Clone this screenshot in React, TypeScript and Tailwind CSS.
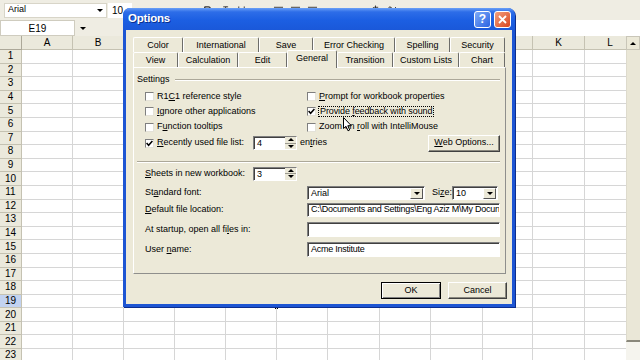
import React from 'react';
import { Bold, Italic, Underline, AlignLeft, AlignCenter, AlignRight, DollarSign, Percent } from 'lucide-react';

const cols = ['A', 'B', 'C', 'D', 'E', 'F', 'G', 'H', 'I', 'J', 'K', 'L'];
const shownHeaders = ['A', 'B', 'K', 'L'];
const rows = Array.from({ length: 23 }, (_, i) => i + 1);

function TriDown() {
  return <span className="w-0 h-0 border-l-[3px] border-r-[3px] border-t-[3px] border-l-transparent border-r-transparent border-t-black" />;
}
function TriUp() {
  return <span className="w-0 h-0 border-l-[3px] border-r-[3px] border-b-[3px] border-l-transparent border-r-transparent border-b-black" />;
}

function Check({ checked }: { checked?: boolean }) {
  return (
    <span className="relative block w-[9px] h-[9px] shrink-0 bg-white border border-t-[#7f7f7f] border-l-[#7f7f7f] border-b-[#e4e2d8] border-r-[#e4e2d8]">
      {checked && (
        <svg className="absolute left-0 top-0" width="7" height="7" viewBox="0 0 7 7">
          <path d="M0.6 3.1 L2.6 5.3 L6.4 0.9" stroke="#000" strokeWidth="1.5" fill="none" />
        </svg>
      )}
    </span>
  );
}

function Spin({ v }: { v: string }) {
  return (
    <div className="w-[44px] h-[14px] flex bg-white border border-t-[#7f7f7f] border-l-[#7f7f7f] border-b-white border-r-white shadow-[inset_1px_1px_0_#404040]">
      <span className="flex-1 pl-[3px] leading-[12px]">{v}</span>
      <div className="w-[11px] flex flex-col">
        <div className="flex-1 bg-[#ece9d8] flex items-center justify-center border-b border-[#9c9a90]"><TriUp /></div>
        <div className="flex-1 bg-[#ece9d8] flex items-center justify-center"><TriDown /></div>
      </div>
    </div>
  );
}

function Combo({ v, w }: { v: string; w: string }) {
  return (
    <div className={`${w} h-[14px] flex items-center bg-white border border-t-[#7f7f7f] border-l-[#7f7f7f] border-b-white border-r-white shadow-[inset_1px_1px_0_#404040]`}>
      <span className="flex-1 pl-[3px] leading-[12px]">{v}</span>
      <div className="w-[13px] h-[11px] mr-[1px] bg-[#ece9d8] flex items-center justify-center border border-t-white border-l-white border-b-[#555] border-r-[#555]"><TriDown /></div>
    </div>
  );
}

function Field({ v, h }: { v?: string; h: string }) {
  return (
    <div className={`flex-1 ${h} flex items-center overflow-hidden whitespace-nowrap bg-white border border-t-[#7f7f7f] border-l-[#7f7f7f] border-b-white border-r-white shadow-[inset_1px_1px_0_#404040]`}>
      <span className="pl-[3px] tracking-[-0.25px]">{v}</span>
    </div>
  );
}

const tabBase = 'h-[15px] leading-none flex items-center justify-center border-t border-l border-r border-t-white border-l-white border-r-[#6d6d6a] rounded-t-[2px] bg-[#ece9d8]';

const row1 = [
  { t: 'Color', w: 'w-[50px]' },
  { t: 'International', w: 'w-[76px]' },
  { t: 'Save', w: 'w-[54px]' },
  { t: 'Error Checking', w: 'w-[82px]' },
  { t: 'Spelling', w: 'w-[55px]' },
  { t: 'Security', w: 'w-[55px]' },
];
const row2 = [
  { t: 'View', w: 'w-[45px]' },
  { t: 'Calculation', w: 'w-[60px]' },
  { t: 'Edit', w: 'w-[49px]' },
  { t: 'General', w: 'w-[50px]', sel: true },
  { t: 'Transition', w: 'w-[56px]' },
  { t: 'Custom Lists', w: 'w-[66px]' },
  { t: 'Chart', w: 'w-[46px]' },
];

export default function App() {
  return (
    <div className="relative w-[640px] h-[360px] overflow-hidden bg-white text-black font-['Liberation_Sans',Arial,sans-serif] text-[9px]">
      {/* Toolbar */}
      <div className="h-[20px] bg-[#efede3] flex items-center">
        <div className="ml-[4px] w-[103px] h-[15px] bg-white border border-[#d8d5c8] flex items-center">
          <span className="flex-1 pl-[3px] text-[9px]">Arial</span>
          <span className="mr-[3px] flex"><TriDown /></span>
        </div>
        <div className="ml-[1px] w-[24px] h-[15px] bg-white flex items-center pl-[4px] text-[10px]">10</div>
        <div className="ml-[70px] flex items-center gap-[6px] text-[#333]">
          <Bold size={11} strokeWidth={3} />
          <Italic size={11} />
          <Underline size={11} />
          <span className="w-[14px]" />
          <AlignLeft size={11} />
          <AlignCenter size={11} />
          <AlignRight size={11} />
          <span className="w-[40px]" />
          <DollarSign size={11} />
          <Percent size={11} />
        </div>
      </div>
      {/* Formula bar */}
      <div className="h-[16px] flex bg-white">
        <div className="w-[75px] h-[16px] bg-white border border-[#cfccbf] flex items-center justify-center text-[10px]">E19</div>
        <div className="w-[48px] bg-[#efede3] flex items-center pl-[5px]"><TriDown /></div>
        <div className="flex-1 bg-white" />
      </div>
      {/* Sheet */}
      <div className="flex">
        <div className="w-[626px] overflow-hidden">
          <div className="grid grid-cols-[22px_51px_51px_51px_51px_51px_51px_52px_51px_52px_50px_52px_51px] grid-rows-[14px_repeat(23,13.6px)]">
            <div className="bg-[#ebe9dc] border-r border-b border-[#aca899]" />
            {cols.map((c) => (
              <div key={c} className="bg-[#ebe9dc] border-r border-b border-[#c5c2b2] flex items-center justify-center text-[10px] leading-none">
                {shownHeaders.includes(c) ? c : null}
              </div>
            ))}
            {rows.map((r) => (
              <React.Fragment key={r}>
                <div className={`${r === 19 ? 'bg-[#c3d3f0]' : 'bg-[#ebe9dc]'} border-r border-b border-[#c5c2b2] flex items-center justify-center text-[10px] leading-none`}>{r}</div>
                {cols.map((c) => (
                  <div key={c} className={`relative border-r border-b border-[#d6d6d6] ${r === 19 && c === 'E' ? 'shadow-[inset_0_0_0_2px_#000]' : ''}`}>
                    {r === 19 && c === 'E' && <span className="absolute right-[-3px] bottom-[-3px] w-[5px] h-[5px] bg-black border border-white" />}
                  </div>
                ))}
              </React.Fragment>
            ))}
          </div>
        </div>
        <div className="w-[14px] flex flex-col">
          <div className="h-[14px] bg-[#ece9d8] border border-[#c9c6b8] flex items-center justify-center"><TriUp /></div>
          <div className="h-[292px] bg-[#eae7d7] border-l border-[#dedbcd] border-b-2 border-b-[#8a887c]" />
          <div className="flex-1 bg-[#f5f4ee]" />
        </div>
      </div>

      {/* Dialog */}
      <div className="absolute left-[123px] top-[8px] w-[392px] h-[299px] flex flex-col rounded-t-[7px] bg-[#1d55d3] shadow-[1px_1px_0_#0b2d8e] overflow-hidden">
        <div className="h-[22px] shrink-0 flex items-center pl-[5px] pr-[4px] bg-[linear-gradient(to_bottom,#6aa0f6_0%,#2d6de8_18%,#1c5fe2_55%,#1a58d9_100%)]">
          <span className="text-white font-bold text-[11.5px] tracking-[-0.2px] [text-shadow:1px_1px_0_#0b2f8c]">Options</span>
          <div className="ml-auto flex gap-[3px]">
            <div className="w-[17px] h-[17px] rounded-[3px] border border-white bg-[linear-gradient(135deg,#7eabf8,#2a62e2)] flex items-center justify-center text-white font-bold text-[12px] leading-none">?</div>
            <div className="w-[17px] h-[17px] rounded-[3px] border border-white bg-[linear-gradient(135deg,#f3a07e,#d9461f)] flex items-center justify-center">
              <svg width="9" height="9" viewBox="0 0 9 9"><path d="M1 1 L8 8 M8 1 L1 8" stroke="#fff" strokeWidth="1.8" /></svg>
            </div>
          </div>
        </div>
        <div className="flex-1 mx-[3px] mb-[3px] bg-[#ece9d8] flex flex-col pt-[7px] pl-[7px] pr-[6px] pb-[5px]">
          {/* Tabs */}
          <div className="h-[15px] flex">
            {row1.map((t) => (
              <div key={t.t} className={`${t.w} ${tabBase}`}>{t.t}</div>
            ))}
          </div>
          <div className="h-[15px] flex items-end">
            {row2.map((t) =>
              t.sel ? (
                <div key={t.t} className={`${t.w} relative z-10 h-[18px] -mb-px leading-none flex items-center justify-center pb-[2px] border-t border-l border-r border-t-white border-l-white border-r-[#6d6d6a] rounded-t-[2px] bg-[#ece9d8]`}>{t.t}</div>
              ) : (
                <div key={t.t} className={`${t.w} ${tabBase}`}>{t.t}</div>
              )
            )}
          </div>
          {/* Panel */}
          <div className="h-[207px] shrink-0 flex flex-col border border-t-white border-l-white border-r-[#8f8f8c] border-b-[#8f8f8c] pl-[3px] pr-[5px]">
            <div className="mt-[6px] h-[12px] flex items-center">
              <span>Settings</span>
              <div className="flex-1 ml-[5px] h-[2px] border-t border-b border-t-[#aca899] border-b-white" />
            </div>
            <div className="mt-[3px] pl-[8px] flex flex-col">
              <div className="h-[15px] flex items-center">
                <div className="w-[162px] flex items-center gap-[3px]"><Check /><span>R1<span className="underline">C</span>1 reference style</span></div>
                <div className="flex items-center gap-[3px]"><Check /><span><span className="underline">P</span>rompt for workbook properties</span></div>
              </div>
              <div className="h-[15px] flex items-center">
                <div className="w-[162px] flex items-center gap-[3px]"><Check /><span><span className="underline">I</span>gnore other applications</span></div>
                <div className="flex items-center gap-[2px]"><Check checked /><span className="px-[1px] border border-dotted border-black leading-[9px] tracking-[-0.1px]">Provide <span className="underline">f</span>eedback with sound</span></div>
              </div>
              <div className="h-[16px] flex items-center">
                <div className="w-[162px] flex items-center gap-[3px]"><Check /><span>F<span className="underline">u</span>nction tooltips</span></div>
                <div className="flex items-center gap-[3px]"><Check /><span>Zoom on <span className="underline">r</span>oll with IntelliMouse</span></div>
              </div>
              <div className="h-[16px] flex items-center">
                <div className="w-[108px] flex items-center gap-[3px]"><Check checked /><span><span className="underline">R</span>ecently used file list:</span></div>
                <Spin v="4" />
                <span className="ml-[3px]">en<span className="underline">t</span>ries</span>
                <div className="ml-auto w-[72px] h-[17px] flex items-center justify-center border border-t-white border-l-white border-b-[#404040] border-r-[#404040] shadow-[inset_-1px_-1px_0_#8a887e]">
                  <span><span className="underline">W</span>eb Options...</span>
                </div>
              </div>
            </div>
            <div className="mt-[10px] h-[2px] border-t border-b border-t-[#aca899] border-b-white" />
            <div className="mt-[3px] h-[15px] pl-[8px] flex items-center">
              <span className="w-[108px]"><span className="underline">S</span>heets in new workbook:</span>
              <Spin v="3" />
            </div>
            <div className="mt-[5px] h-[14px] pl-[8px] flex items-center">
              <span className="w-[162px]">St<span className="underline">a</span>ndard font:</span>
              <Combo v="Arial" w="w-[118px]" />
              <span className="ml-[7px] w-[20px]">Si<span className="underline">z</span>e:</span>
              <Combo v="10" w="w-[46px]" />
            </div>
            <div className="mt-[3px] h-[14px] pl-[8px] flex items-center">
              <span className="w-[162px] shrink-0"><span className="underline">D</span>efault file location:</span>
              <Field h="h-[14px]" v="C:\Documents and Settings\Eng Aziz M\My Docun" />
            </div>
            <div className="mt-[5px] h-[15px] pl-[8px] flex items-center">
              <span className="w-[162px] shrink-0">At startup, open all fi<span className="underline">l</span>es in:</span>
              <Field h="h-[15px]" />
            </div>
            <div className="mt-[5px] h-[15px] pl-[8px] flex items-center">
              <span className="w-[162px] shrink-0">User <span className="underline">n</span>ame:</span>
              <Field h="h-[15px]" v="Acme Institute" />
            </div>
          </div>
          {/* Buttons */}
          <div className="mt-[8px] h-[17px] flex justify-end gap-[7px] -mr-px">
            <div className="w-[60px] h-[17px] flex items-center justify-center border border-black shadow-[inset_1px_1px_0_#fff,inset_-1px_-1px_0_#808080]">OK</div>
            <div className="w-[59px] h-[17px] flex items-center justify-center border border-t-white border-l-white border-b-[#404040] border-r-[#404040] shadow-[inset_-1px_-1px_0_#8a887e]">Cancel</div>
          </div>
        </div>
      </div>

      {/* Mouse cursor */}
      <svg className="absolute left-[343px] top-[117px]" width="10" height="15" viewBox="0 0 10 15">
        <path d="M0.5 0.5 L0.5 11.5 L3 9.3 L5 13.8 L6.7 13 L4.8 8.7 L8.3 8.7 Z" fill="#fff" stroke="#000" strokeWidth="1" strokeLinejoin="round" />
      </svg>
    </div>
  );
}
